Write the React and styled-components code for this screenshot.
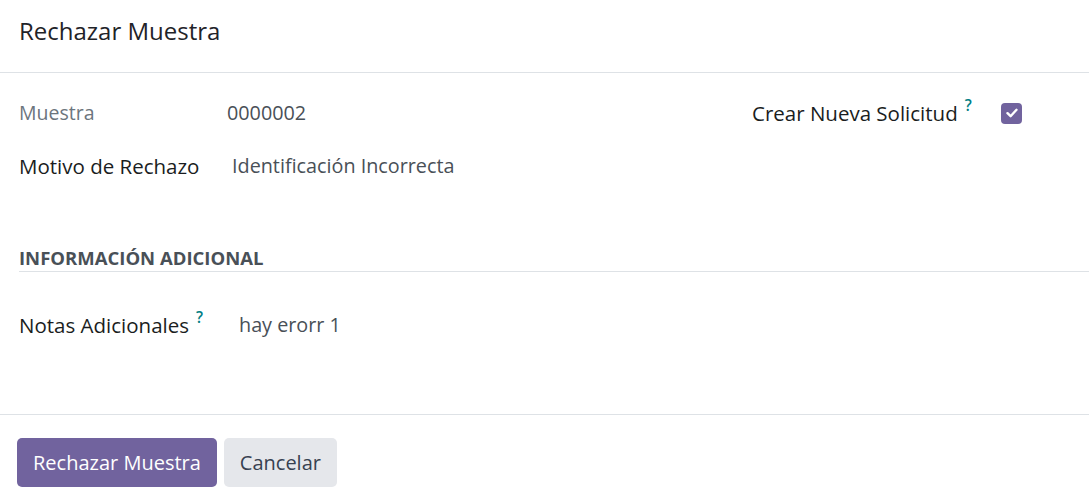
import React from 'react';
import styled, { createGlobalStyle } from 'styled-components';

const Global = createGlobalStyle`
  html, body {
    margin: 0;
    padding: 0;
    background: #fff;
  }
  body {
    font-family: "Open Sans", "Noto Sans", sans-serif;
    color: #212529;
  }
`;

const Dialog = styled.div`
  width: 1089px;
  height: 499px;
  display: flex;
  flex-direction: column;
  background: #fff;
`;

const Header = styled.header`
  height: 73px;
  box-sizing: border-box;
  border-bottom: 1px solid #dee2e6;
  padding: 14px 19px 0;
`;

const Title = styled.h4`
  margin: 0;
  font-size: 24px;
  font-weight: 500;
  line-height: 34px;
  color: #1f2328;
`;

const Body = styled.main`
  flex: 1;
  padding: 25px 0 0 19px;
  display: flex;
  flex-direction: column;
`;

const Row = styled.div`
  display: flex;
  align-items: center;
  height: 30px;
  margin-top: ${(p) => p.$top || 0}px;
  margin-bottom: ${(p) => p.$gap || 0}px;
`;

const Label = styled.div`
  width: ${(p) => p.$w || 208}px;
  flex: none;
  font-size: ${(p) => (p.$muted ? 19.5 : 20.5)}px;
  font-weight: ${(p) => (p.$muted ? 400 : 500)};
  line-height: 30px;
  color: ${(p) => (p.$muted ? '#6c757d' : '#1a1d21')};
  white-space: nowrap;
`;

const Value = styled.div`
  font-size: 19.8px;
  line-height: 30px;
  color: #495057;
  padding-left: ${(p) => p.$pad || 0}px;
`;

const Help = styled.sup`
  color: #017e84;
  font-size: 15.5px;
  font-weight: 600;
  margin-left: 7px;
  vertical-align: 10px;
  line-height: 0;
`;

const Spacer = styled.div`
  flex: 1;
`;

const RightGroup = styled.div`
  display: flex;
  align-items: center;
  width: 337px;
  flex: none;
`;

const Check = styled.span`
  width: 21px;
  height: 21px;
  box-sizing: border-box;
  border-radius: 4px;
  background: #71639e;
  display: inline-flex;
  align-items: center;
  justify-content: center;
  margin-left: 24px;
`;

const Separator = styled.div`
  margin-top: 52px;
  border-bottom: 1px solid #dee2e6;
  height: 39px;
  box-sizing: border-box;
  display: flex;
  align-items: flex-end;
`;

const SeparatorTitle = styled.div`
  font-size: 18.5px;
  font-weight: 700;
  line-height: 26px;
  text-transform: uppercase;
  color: #495057;
`;

const Footer = styled.footer`
  height: 85px;
  box-sizing: border-box;
  border-top: 1px solid #dee2e6;
  padding: 23px 17px 0;
  display: flex;
  align-items: flex-start;
  gap: 7px;
`;

const Button = styled.button`
  height: 49px;
  padding: 0 16px;
  border: none;
  border-radius: 5px;
  font-family: "Open Sans", "Noto Sans", sans-serif;
  font-size: 20px;
  background: ${(p) => (p.$primary ? '#71639e' : '#e5e7eb')};
  color: ${(p) => (p.$primary ? '#fff' : '#374151')};
  cursor: pointer;
`;

export default function App() {
  return (
    <Dialog>
      <Global />
      <Header>
        <Title>Rechazar Muestra</Title>
      </Header>
      <Body>
        <Row $gap={23}>
          <Label $muted>Muestra</Label>
          <Value>0000002</Value>
          <Spacer />
          <RightGroup>
            <Label $w={225}>
              Crear Nueva Solicitud<Help>?</Help>
            </Label>
            <Check>
              <svg width="12" height="10" viewBox="0 0 12 10">
                <path d="M1.5 5.2 L4.6 8.2 L10.5 1.8" fill="none" stroke="#fff" strokeWidth="2.4" strokeLinecap="round" strokeLinejoin="round" />
              </svg>
            </Check>
          </RightGroup>
        </Row>
        <Row>
          <Label>Motivo de Rechazo</Label>
          <Value $pad={5}>Identificación Incorrecta</Value>
        </Row>
        <Separator>
          <SeparatorTitle>Información Adicional</SeparatorTitle>
        </Separator>
        <Row $top={38}>
          <Label $w={220}>
            Notas Adicionales<Help>?</Help>
          </Label>
          <Value>hay erorr 1</Value>
        </Row>
      </Body>
      <Footer>
        <Button $primary>Rechazar Muestra</Button>
        <Button>Cancelar</Button>
      </Footer>
    </Dialog>
  );
}
